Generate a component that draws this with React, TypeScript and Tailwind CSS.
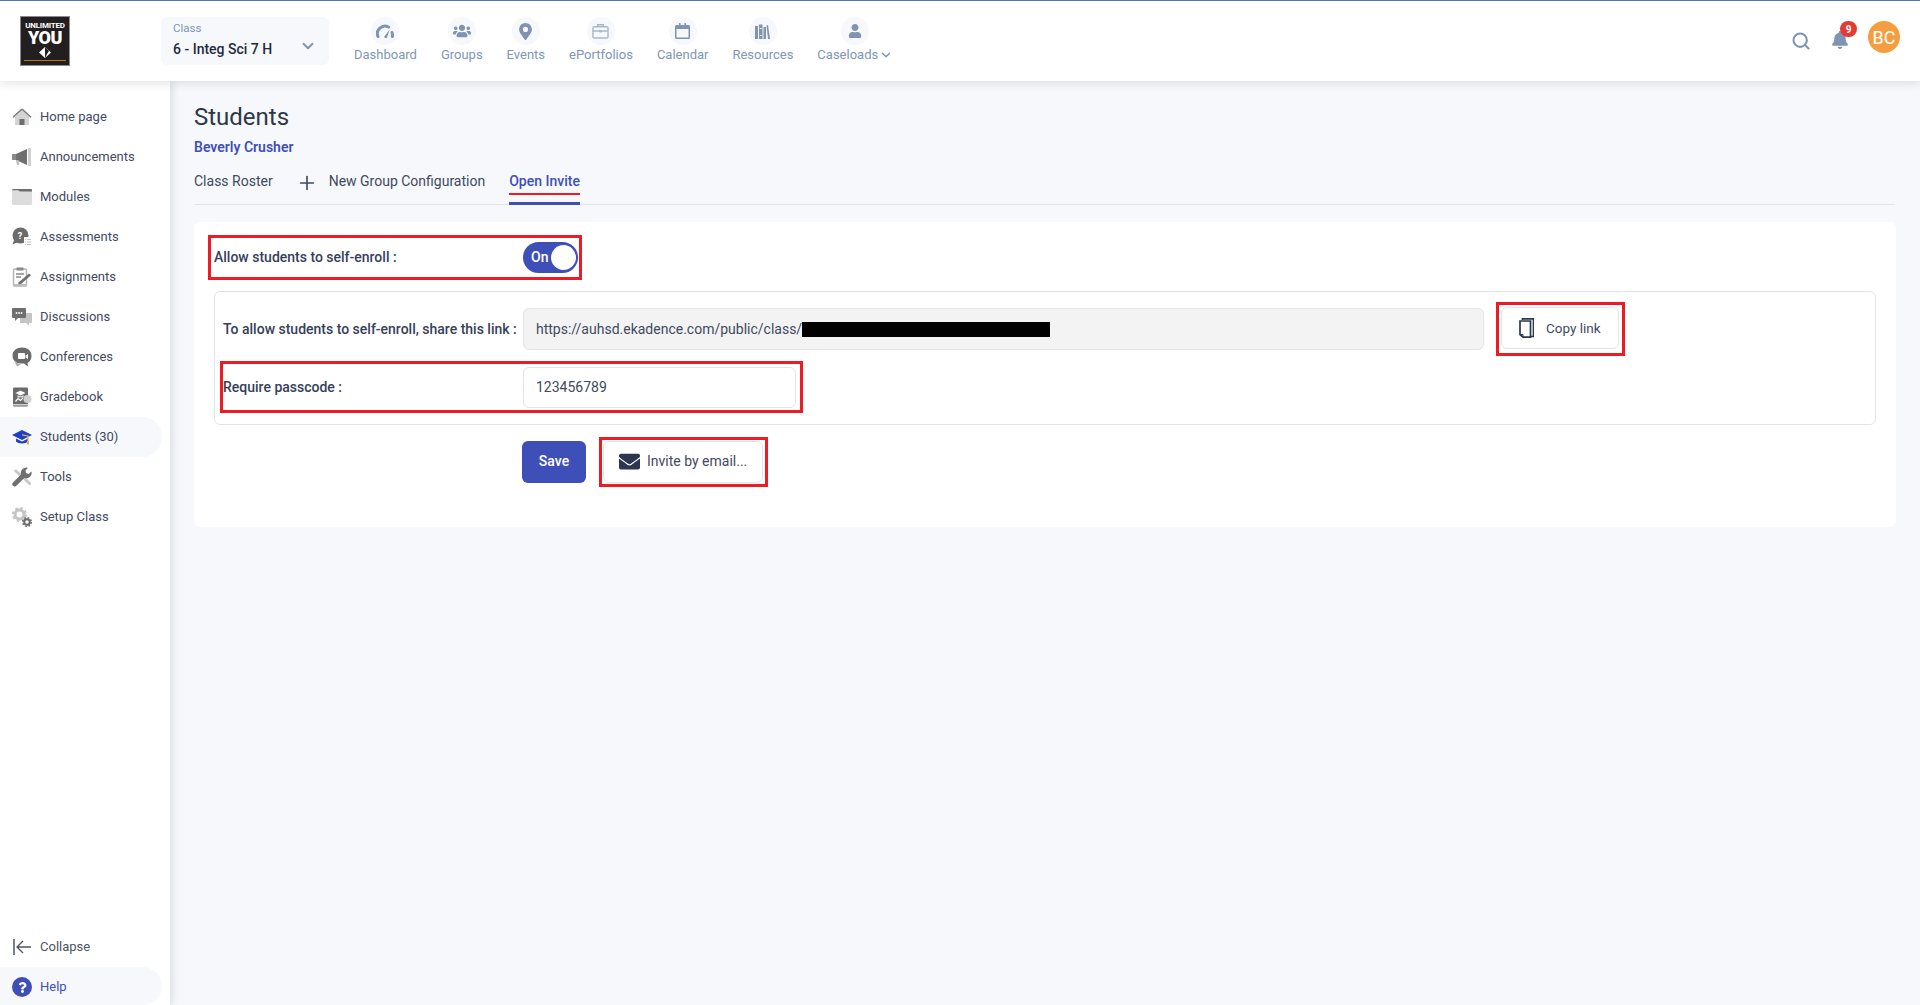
import React from 'react';
import { FaUsers, FaMapMarkerAlt, FaUser, FaBell, FaEnvelope, FaQuestion } from 'react-icons/fa';
import { ChevronDown, Search, Plus } from 'lucide-react';

const DashboardIcon = () => (
  <svg width="18" height="14" viewBox="0 0 18 14" fill="none">
    <path d="M2 12.500A7.500 7.500 0 0 1 12.500 3" stroke="#7f93b2" strokeWidth="3" strokeLinecap="round" />
    <path d="M16 8.500a7.500 7.500 0 0 1 .4 4" stroke="#7f93b2" strokeWidth="3" strokeLinecap="round" />
    <path d="M8.300 12.600 13.800 5.400l-2.800 8.200a1.500 1.500 0 0 1-2.700-1z" fill="#7f93b2" />
  </svg>
);

const PortfolioIcon = () => (
  <svg width="17" height="16" viewBox="0 0 18 17" fill="none" stroke="#a9b7cc" strokeWidth="1.500">
    <rect x="1" y="4" width="16" height="12" rx="1.500" />
    <path d="M6 4V1.800h6V4M1 8.500h16" />
    <rect x="7.500" y="7.500" width="3" height="2.500" fill="#a9b7cc" stroke="none" />
  </svg>
);

const CalendarIcon = () => (
  <svg width="15" height="16" viewBox="0 0 15 16" fill="#7f93b2">
    <path d="M1.500 2H4V0h1.600v2h3.800V0H11v2h2.500A1.500 1.500 0 0 1 15 3.500v11a1.500 1.500 0 0 1-1.500 1.500h-12A1.500 1.500 0 0 1 0 14.500v-11A1.500 1.500 0 0 1 1.500 2zM1.500 6v8.500h12V6z" fillRule="evenodd" />
  </svg>
);

const ResourcesIcon = () => (
  <svg width="15" height="15" viewBox="0 0 15 15" fill="#7f93b2">
    <rect x="0" y="2" width="3" height="13" />
    <rect x="4" y="0.500" width="3.500" height="14.500" />
    <rect x="8.500" y="3" width="2.500" height="12" />
    <path d="M11.500 1.500 13 1l2 14h-2z" />
    <rect x="4.800" y="4" width="1.800" height="1" fill="#fff" />
    <rect x="4.800" y="11" width="1.800" height="1" fill="#fff" />
  </svg>
);

const HomeIcon = () => (
  <svg width="20" height="20" viewBox="0 0 20 20">
    <path d="M3 9.500 10 3.500l7 6V18H3z" fill="#d4d4d4" />
    <path d="M0.500 9.800 9.200 1.700h1.600l8.700 8.100-.9.900L10 3.300 1.400 10.700z" fill="#7d7d7d" />
    <rect x="7.500" y="12" width="5" height="6" fill="#6f6f6f" />
  </svg>
);

const MegaphoneIcon = () => (
  <svg width="20" height="20" viewBox="0 0 20 20">
    <path d="M0 7h4v6H0z" fill="#8a8a8a" />
    <path d="M4 7l11-5v16L4 13z" fill="#6f6f6f" />
    <rect x="16" y="1" width="3" height="18" rx="1" fill="#cfcfcf" />
    <path d="M4 13h2.500l.8 5H5z" fill="#bdbdbd" />
  </svg>
);

const FolderIcon = () => (
  <svg width="20" height="16" viewBox="0 0 20 16">
    <rect x="0" y="0" width="20" height="16" rx="1.500" fill="#dcdcdc" />
    <path d="M1.500 0H19a1 1 0 0 1 1 1v1.500H8L6 1.200H0A1.500 1.500 0 0 1 1.500 0z" fill="#6f6f6f" />
  </svg>
);

const AssessmentIcon = () => (
  <svg width="20" height="20" viewBox="0 0 20 20">
    <circle cx="8.500" cy="8.500" r="8" fill="#6b6b6b" />
    <path d="M2 13 0.500 17.500 6 15z" fill="#6b6b6b" />
    <text x="5.800" y="12" fontSize="9" fontWeight="700" fill="#fff" fontFamily="Roboto, sans-serif">?</text>
    <rect x="12" y="10" width="8" height="10" fill="#fff" />
    <path d="M13 12.500h1M13 15h1M13 17.500h1M15 12.500h4M15 15h4M15 17.500h4" stroke="#c4c4c4" strokeWidth="1" />
  </svg>
);

const AssignmentIcon = () => (
  <svg width="20" height="20" viewBox="0 0 20 20">
    <rect x="1.500" y="2" width="13" height="17" rx="1" fill="#fff" stroke="#b5b5b5" strokeWidth="1.500" />
    <rect x="4.500" y="0.500" width="7" height="3" rx="0.500" fill="#8a8a8a" />
    <path d="M4 7h8M4 10h5" stroke="#8a8a8a" strokeWidth="1.300" />
    <path d="M6.500 15.500 17 6.500l2 1.800L8.500 17.500l-2.500.5z" fill="#6f6f6f" />
    <rect x="1" y="17" width="14" height="2" fill="#bdbdbd" />
  </svg>
);

const DiscussionIcon = () => (
  <svg width="20" height="18" viewBox="0 0 20 18">
    <path d="M8 5h11a1 1 0 0 1 1 1v8a1 1 0 0 1-1 1h-2v2.500L14 15H8z" fill="#c4c4c4" />
    <path d="M1 0h12a1 1 0 0 1 1 1v8a1 1 0 0 1-1 1H6l-3 3v-3H1a1 1 0 0 1-1-1V1a1 1 0 0 1 1-1z" fill="#6f6f6f" />
    <circle cx="4.500" cy="5" r="0.900" fill="#fff" />
    <circle cx="7" cy="5" r="0.900" fill="#fff" />
    <circle cx="9.500" cy="5" r="0.900" fill="#fff" />
  </svg>
);

const ConferenceIcon = () => (
  <svg width="20" height="20" viewBox="0 0 20 20">
    <path d="M10 0.500c5.500 0 9.500 3.500 9.500 8s-2 6.500-4 7.500l.5 3.500-4-3H9C4 16.500.5 13 .5 8.500S4.500.5 10 .5z" fill="#6b6b6b" />
    <path d="M2.500 14C4 16 6 17 9 17l-4 2.500z" fill="#a8a8a8" />
    <rect x="6" y="6" width="7" height="6" rx="1" fill="#fff" />
    <path d="M13.500 8.500 16 7v5l-2.500-1.500z" fill="#fff" />
  </svg>
);

const GradebookIcon = () => (
  <svg width="20" height="20" viewBox="0 0 20 20">
    <rect x="1" y="0.500" width="15" height="19" rx="1" fill="#6b6b6b" />
    <rect x="1" y="17" width="15" height="1.500" fill="#cfcfcf" />
    <path d="M3.500 6 8.500 3.500l5 2.500-5 2.500z" fill="#fff" />
    <path d="M5.500 8v2.500h6V8l-3 1.500z" fill="#e4e4e4" />
    <path d="M3.500 14.500 6 11.500l2.500 2 2.500-2.500" stroke="#fff" strokeWidth="1.200" fill="none" />
    <circle cx="15.500" cy="12" r="4" fill="#cfcfcf" />
  </svg>
);

const CapIcon = () => (
  <svg width="20" height="16" viewBox="0 0 20 16">
    <path d="M10 1 20 6l-10 5L0 6z" fill="#1f3fc4" />
    <path d="M4 9.500v3c2 2.500 10 2.500 12 0v-3L10 12.500z" fill="#1f3fc4" />
    <path d="M10 5.800 16 7v7" stroke="#e5b040" strokeWidth="1.200" fill="none" />
    <rect x="15" y="12" width="2" height="3.500" fill="#e5b040" />
  </svg>
);

const ToolsIcon = () => (
  <svg width="20" height="20" viewBox="0 0 20 20">
    <path d="M4 2 2 4l6 6 2-2z" fill="#c8c8c8" />
    <path d="M10 11l7 7a1.500 1.500 0 0 0 2-2l-7-7z" fill="#c8c8c8" />
    <path d="M19.500 4.500 16.500 7 14 6l-.5-2.500L16 .8A5.500 5.500 0 0 0 9 7.500L1 15.500a2.300 2.300 0 0 0 3.300 3.300L12.300 11a5.500 5.500 0 0 0 7.200-6.500z" fill="#6f6f6f" />
  </svg>
);

const GearsIcon = () => (
  <svg width="20" height="20" viewBox="0 0 20 20">
    <circle cx="7.500" cy="7.500" r="4.500" fill="none" stroke="#c4c4c4" strokeWidth="3" />
    <circle cx="7.500" cy="7.500" r="6.500" fill="none" stroke="#c4c4c4" strokeWidth="2" strokeDasharray="2.500 2.600" />
    <circle cx="15" cy="15" r="2.800" fill="none" stroke="#6b6b6b" strokeWidth="2" />
    <circle cx="15" cy="15" r="4.300" fill="none" stroke="#6b6b6b" strokeWidth="1.500" strokeDasharray="1.800 1.580" />
  </svg>
);

const CollapseIcon = () => (
  <svg width="18" height="16" viewBox="0 0 18 16" fill="none" stroke="#4b5563" strokeWidth="1.300">
    <path d="M1 0v16" strokeWidth="1.500" />
    <path d="M18 8H4M10 2 4 8l6 6" />
  </svg>
);

const CopyIcon = () => (
  <svg width="15" height="20" viewBox="0 0 15 20" fill="none" stroke="#2b3650" strokeWidth="1.700">
    <path d="M3.500 2V.8h11V18.500h-3" />
    <path d="M1 3h10.500v16.200H4L1 16.500z" />
    <path d="M4 19v-2.500H1.500" strokeWidth="1" />
  </svg>
);

const navItems = [
  { label: 'Dashboard', icon: <DashboardIcon /> },
  { label: 'Groups', icon: <FaUsers size={18} color="#7f93b2" /> },
  { label: 'Events', icon: <FaMapMarkerAlt size={17} color="#7f93b2" /> },
  { label: 'ePortfolios', icon: <PortfolioIcon /> },
  { label: 'Calendar', icon: <CalendarIcon /> },
  { label: 'Resources', icon: <ResourcesIcon /> },
];

const sideItems = [
  { label: 'Home page', icon: <HomeIcon /> },
  { label: 'Announcements', icon: <MegaphoneIcon /> },
  { label: 'Modules', icon: <FolderIcon /> },
  { label: 'Assessments', icon: <AssessmentIcon /> },
  { label: 'Assignments', icon: <AssignmentIcon /> },
  { label: 'Discussions', icon: <DiscussionIcon /> },
  { label: 'Conferences', icon: <ConferenceIcon /> },
  { label: 'Gradebook', icon: <GradebookIcon /> },
  { label: 'Students (30)', icon: <CapIcon />, active: true },
  { label: 'Tools', icon: <ToolsIcon /> },
  { label: 'Setup Class', icon: <GearsIcon /> },
];

const Header = () => (
  <header className="relative z-20 flex h-[81px] shrink-0 items-start border-t border-[#4a7ab5] bg-white shadow-[0_2px_10px_rgba(0,0,0,0.12)]">
    {/* Logo */}
    <div className="ml-[20px] mt-[15px] flex h-[50px] w-[50px] flex-col items-center border border-[#8a8a8a] bg-[#231f20] pt-[5px] text-white">
      <span className="text-[8px] font-bold leading-[8px] tracking-[-0.2px]">UNLIMITED</span>
      <span className="text-[18px] font-black leading-[15px] tracking-[-0.5px]">YOU</span>
      <svg width="14" height="13" viewBox="0 0 14 13" className="mt-[1px]">
        <path d="M7 1 13 6.500 7 12 1 6.500z" fill="#fff" />
        <path d="M7 1 11 5 9 8 7 12z" fill="#231f20" />
      </svg>
      <span className="mt-[1px] h-[1px] w-[42px] bg-[#b8741a]" />
    </div>

    {/* Class select */}
    <div className="ml-[91px] mt-[16px] flex h-[48px] w-[168px] items-center justify-between rounded-md bg-[#f6f8fc] pl-[12px] pr-[12px]">
      <div className="-mt-[3px] flex flex-col">
        <span className="text-[11.500px] leading-[14px] text-[#8096b5]">Class</span>
        <span className="mt-[5px] text-[14px] font-medium leading-[18px] text-[#1f2a40]">6 - Integ Sci 7 H</span>
      </div>
      <ChevronDown size={18} color="#7f93b2" strokeWidth={2.500} className="mt-[9px]" />
    </div>

    {/* Main nav */}
    <nav className="ml-[25px] mt-[16px] flex gap-[24px]">
      {navItems.map((item) => (
        <div key={item.label} className="flex flex-col items-center">
          <span className="flex h-[28px] w-[28px] items-center justify-center rounded-full bg-[#f6f8fc]">{item.icon}</span>
          <span className="mt-[1px] text-[13px] leading-[18px] text-[#8096b5]">{item.label}</span>
        </div>
      ))}
      <div className="flex flex-col items-center">
        <span className="flex h-[28px] w-[28px] items-center justify-center rounded-full bg-[#f6f8fc]">
          <FaUser size={14} color="#7f93b2" />
        </span>
        <span className="mt-[1px] flex items-center text-[13px] leading-[18px] text-[#8096b5]">
          Caseloads
          <ChevronDown size={14} strokeWidth={2.500} className="ml-[1px]" />
        </span>
      </div>
    </nav>

    {/* Right side */}
    <div className="ml-auto mr-[20px] mt-[20px] flex items-start">
      <Search size={20} color="#7f93b2" strokeWidth={2.500} className="mt-[10px]" />
      <div className="relative ml-[20px] mt-[10px]">
        <FaBell size={18} color="#7f93b2" />
        <span className="absolute -right-[8px] -top-[10px] flex h-[16px] w-[17px] items-center justify-center rounded-full bg-[#e53935] text-[10px] font-bold text-white">9</span>
      </div>
      <div className="ml-[19px] flex h-[32px] w-[32px] items-center justify-center rounded-full bg-[#f59e3f] text-[18px] text-white">BC</div>
    </div>
  </header>
);

const Sidebar = () => (
  <aside className="relative z-10 flex w-[170px] shrink-0 flex-col justify-between bg-white pt-[16px] shadow-[2px_0_8px_rgba(0,0,0,0.12)]">
    <ul className="flex flex-col">
      {sideItems.map((item) => (
        <li
          key={item.label}
          className={`flex h-[40px] w-[162px] items-center rounded-r-full ${item.active ? 'bg-[#f6f8fc]' : ''}`}
        >
          <span className="flex w-[40px] items-center pl-[12px]">{item.icon}</span>
          <span className="text-[13px] text-[#3f4a60]">{item.label}</span>
        </li>
      ))}
    </ul>
    <div className="flex flex-col">
      <div className="flex h-[40px] items-center">
        <span className="flex w-[40px] pl-[13px]"><CollapseIcon /></span>
        <span className="text-[13px] text-[#4b5563]">Collapse</span>
      </div>
      <div className="flex h-[38px] w-[162px] items-center rounded-tr-[19px] rounded-br-[19px] bg-[#f6f8fc] pt-[2px]">
        <span className="ml-[12px] mr-[8px] flex h-[20px] w-[20px] items-center justify-center rounded-full bg-[#3f4fb8]">
          <FaQuestion size={11} color="#fff" />
        </span>
        <span className="text-[13px] text-[#3f4fb8]">Help</span>
      </div>
    </div>
  </aside>
);

const Card = () => (
  <section className="mt-[17px] h-[305px] w-[1702px] rounded-md bg-white pt-[13px]">
    {/* Self-enroll toggle */}
    <div className="ml-[14px] flex h-[45px] w-[374px] items-center justify-between border-[3px] border-[#ed1c24] pl-[3px] pr-[1px]">
      <span className="text-[14px] font-medium text-[#36405a]">Allow students to self-enroll :</span>
      <span className="flex h-[31px] w-[55px] items-center justify-between rounded-full bg-[#3f4fb8] pl-[8px] pr-[2px]">
        <span className="text-[14px] font-medium text-white">On</span>
        <span className="h-[25px] w-[25px] rounded-full bg-white" />
      </span>
    </div>

    {/* Share link box */}
    <div className="ml-[20px] mt-[11px] h-[134px] w-[1662px] rounded-md border border-[#e2e4e8] bg-white pt-[10px]">
      <div className="flex h-[54px] items-center pl-[8px]">
        <span className="w-[300px] text-[14px] font-medium text-[#36405a]">To allow students to self-enroll, share this link :</span>
        <div className="flex h-[42px] w-[961px] items-center rounded-md border border-[#e2e4e8] bg-[#f3f3f4] pl-[12px] text-[14px] text-[#3f4a60]">
          https://auhsd.ekadence.com/public/class/
          <span className="h-[15px] w-[248px] bg-black" />
        </div>
        <div className="ml-[12px] h-[54px] w-[129px] border-[3px] border-[#ed1c24] p-[2px]">
          <button className="flex h-[42px] w-[118px] items-center rounded-md border border-[#e2e4e8] bg-white pl-[17px] text-[13.500px] text-[#3f4a60]">
            <CopyIcon />
            <span className="ml-[12px]">Copy link</span>
          </button>
        </div>
      </div>
      <div className="ml-[5px] mt-[5px] flex h-[52px] w-[583px] items-center border-[3px] border-[#ed1c24]">
        <span className="w-[300px] pt-[1px] text-[14px] font-medium text-[#36405a]">Require passcode :</span>
        <input
          readOnly
          value="123456789"
          className="h-[41px] w-[273px] rounded-md border border-[#e2e4e8] bg-white pl-[12px] text-[14px] text-[#3f4a60] outline-none"
        />
      </div>
    </div>

    {/* Actions */}
    <div className="ml-[328px] mt-[12px] flex h-[50px] items-center">
      <button className="h-[42px] w-[64px] rounded-md bg-[#3f4fb8] pb-[1px] text-[14px] font-medium text-white">Save</button>
      <div className="ml-[13px] flex h-[50px] w-[169px] items-center border-[3px] border-[#ed1c24] pl-[1px]">
        <button className="flex h-[42px] w-[160px] items-center rounded-md border border-[#e2e4e8] bg-white pb-[1px] pl-[15px] text-[14px] text-[#3f4a60]">
          <FaEnvelope size={21} color="#2b3650" />
          <span className="ml-[7px]">Invite by email...</span>
        </button>
      </div>
    </div>
  </section>
);

const App: React.FC = () => {
  return (
    <div className="flex h-[1005px] flex-col overflow-hidden bg-[#f6f8fc] font-['Roboto',sans-serif]">
      <Header />
      <div className="flex min-h-0 flex-1">
        <Sidebar />
        <main className="flex-1 pl-[24px] pt-[20px]">
          <h1 className="text-[24px] leading-[32px] text-[#2d3748]">Students</h1>
          <p className="mt-[4px] text-[14px] font-semibold leading-[20px] text-[#3f4fb8]">Beverly Crusher</p>

          {/* Tabs */}
          <div className="mt-[8px] flex h-[40px] w-[1701px] items-start border-b border-[#e2e4e8] pt-[6px] text-[14px] leading-[20px] text-[#3f4a60]">
            <span>Class Roster</span>
            <Plus size={22} strokeWidth={1.800} className="ml-[23px] mt-[1px]" />
            <span className="ml-[11px]">New Group Configuration</span>
            <span className="relative ml-[24px] h-[34px] border-b-[3px] border-[#3f4fb8] font-medium text-[#3f4fb8]">
              Open Invite
              <span className="absolute left-0 top-[22px] h-[2px] w-full bg-[#ed1c24]" />
            </span>
          </div>

          <Card />
        </main>
      </div>
    </div>
  );
};

export default App;
